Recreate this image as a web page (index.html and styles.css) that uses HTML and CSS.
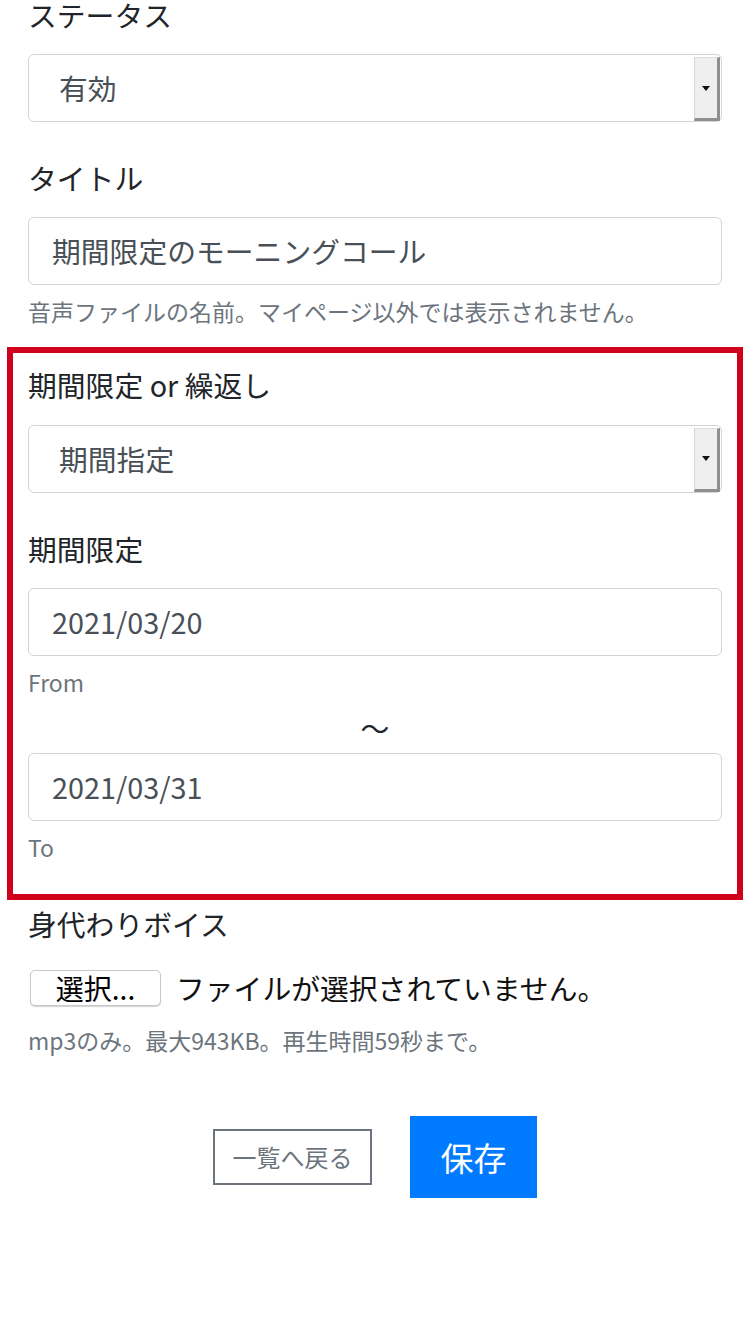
FILE: index.html
```html
<!DOCTYPE html>
<html lang="ja">
<head>
<meta charset="utf-8">
<title>編集</title>
<link rel="stylesheet" href="styles.css">
</head>
<body>
<main class="page">
  <div class="group group-status">
    <div class="label label-first">ステータス</div>
    <div class="select-box">
      <span class="select-value">有効</span>
      <span class="menu-btn"><span class="caret"></span></span>
    </div>
  </div>

  <div class="group">
    <div class="label">タイトル</div>
    <div class="input-box">期間限定のモーニングコール</div>
    <div class="help">音声ファイルの名前。マイページ以外では表示されません。</div>
  </div>

  <section class="highlight">
    <div class="group group-mode">
      <div class="label">期間限定 or 繰返し</div>
      <div class="select-box">
        <span class="select-value">期間指定</span>
        <span class="menu-btn"><span class="caret"></span></span>
      </div>
    </div>
    <div class="group">
      <div class="label">期間限定</div>
      <div class="input-box">2021/03/20</div>
      <div class="help">From</div>
      <div class="tilde">〜</div>
      <div class="input-box input-to">2021/03/31</div>
      <div class="help">To</div>
    </div>
  </section>

  <div class="group group-voice">
    <div class="label">身代わりボイス</div>
    <div class="file-row">
      <span class="file-btn">選択...</span>
      <span class="file-text">ファイルが選択されていません。</span>
    </div>
    <div class="help help-mp3">mp3のみ。最大943KB。再生時間59秒まで。</div>
  </div>

  <div class="actions">
    <span class="btn-back">一覧へ戻る</span>
    <span class="btn-save">保存</span>
  </div>
</main>
</body>
</html>
```

FILE: styles.css
```css
* { box-sizing: border-box; }

html, body {
  margin: 0;
  padding: 0;
  background: #ffffff;
}

body {
  font-family: "Noto Sans CJK JP", "Noto Sans", sans-serif;
  font-size: 28.8px;
  line-height: 42px;
  color: #212529;
  width: 750px;
  height: 1334px;
  overflow: hidden;
}

.page {
  padding: 0 28px;
}

.label {
  font-size: 28.8px;
  line-height: 42px;
  color: #212529;
  margin-bottom: 18px;
}

.label-first {
  margin-top: -6px;
}

.group-status {
  margin-bottom: 35px;
}

.select-box {
  display: flex;
  height: 68px;
  border: 1px solid #ced4da;
  border-radius: 6px;
  background: #ffffff;
}

.select-value {
  flex: 1;
  display: flex;
  align-items: center;
  padding-left: 30px;
  color: #495057;
}

.menu-btn {
  width: 26px;
  margin: 2px 1px 0 0;
  background: #efefef;
  border-top: 1px solid #dcdcdc;
  border-left: 1px solid #d6d6d6;
  border-right: 3px solid #8f8f8f;
  border-bottom: 3px solid #8f8f8f;
  display: flex;
  align-items: center;
  justify-content: center;
}

.caret {
  width: 0;
  height: 0;
  border-left: 4px solid transparent;
  border-right: 4px solid transparent;
  border-top: 5px solid #111111;
}

.input-box {
  height: 68px;
  border: 1px solid #ced4da;
  border-radius: 6px;
  padding-left: 23px;
  display: flex;
  align-items: center;
  color: #495057;
  background: #ffffff;
}

.help {
  margin-top: 10px;
  font-size: 23px;
  line-height: 33.6px;
  color: #6c757d;
}

.highlight {
  margin: 18px -21px 0;
  border: 6px solid #d0021b;
  padding: 11.5px 15px 29.4px;
}

.group-mode {
  margin-bottom: 35px;
}

.group-mode .label {
  margin-bottom: 18.5px;
}

.tilde {
  margin-top: 7.4px;
  text-align: center;
  line-height: 42px;
  color: #212529;
}

.input-to {
  margin-top: 4px;
}

.group-voice {
  margin-top: 3px;
}

.group-voice .label {
  margin-bottom: 25px;
}

.file-row {
  display: flex;
  align-items: center;
  height: 36px;
  gap: 15px;
  padding-left: 2px;
}

.file-btn {
  width: 131px;
  height: 36px;
  border: 1px solid #c9c9c9;
  border-radius: 5px;
  background: #ffffff;
  box-shadow: 0 1px 1px rgba(0, 0, 0, 0.18);
  display: flex;
  align-items: center;
  justify-content: center;
  font-size: 28px;
  color: #000000;
}

.file-text {
  font-size: 28.8px;
  color: #111111;
}

.help-mp3 {
  margin-top: 18px;
}

.actions {
  margin-top: 59px;
  display: flex;
  justify-content: center;
  align-items: center;
  gap: 38px;
}

.btn-back {
  width: 159px;
  height: 56px;
  border: 2px solid #6c757d;
  color: #6c757d;
  font-size: 24px;
  display: flex;
  align-items: center;
  justify-content: center;
}

.btn-save {
  width: 127px;
  height: 82px;
  background: #007bff;
  color: #ffffff;
  font-size: 33px;
  display: flex;
  align-items: center;
  justify-content: center;
}
```
